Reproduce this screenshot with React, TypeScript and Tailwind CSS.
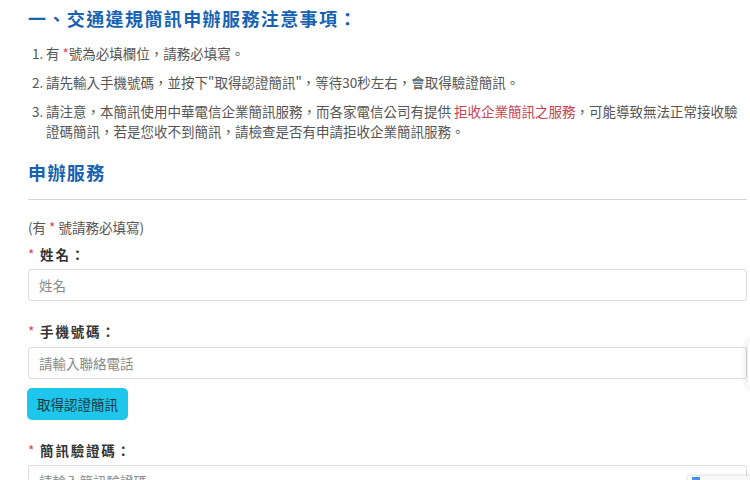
import React from "react";

const font = { fontFamily: '"Noto Sans CJK TC", "Noto Sans", sans-serif', fontFeatureSettings: '"locl" 1' };

function Label({ text }: { text: string }) {
  return (
    <div className="h-[20px] leading-[20px] text-[13.5px] font-bold text-[#333] tracking-[1.8px]">
      <span className="text-[#d0455a] font-normal mr-[4px]">*</span>
      {text}
    </div>
  );
}

function Field({ placeholder }: { placeholder: string }) {
  return (
    <input
      placeholder={placeholder}
      className="block w-full h-[32px] border border-[#dcdcdc] rounded-[3px] px-[10px] text-[13.5px] text-[#333] placeholder:text-[#8a8a8a] bg-white outline-none"
    />
  );
}

export default function App() {
  return (
    <div lang="zh-TW" style={font} className="relative w-[750px] h-[480px] overflow-hidden bg-white">
      <div className="pl-[28px] pr-[3px] pt-[5px]">
        <h1 className="text-[18px] leading-[26px] font-bold text-[#1662b3] tracking-[1.4px]">
          一、交通違規簡訊申辦服務注意事項：
        </h1>
        <div className="mt-[12px] text-[13.5px] leading-[20px] text-[#555]">
          <div className="flex">
            <span className="w-[18px] pl-[4px] shrink-0">1.</span>
            <span>
              有 <span className="text-[#d0455a]">*</span>號為必填欄位，請務必填寫。
            </span>
          </div>
          <div className="flex mt-[9px]">
            <span className="w-[18px] pl-[4px] shrink-0">2.</span>
            <span>請先輸入手機號碼，並按下"取得認證簡訊"，等待30秒左右，會取得驗證簡訊。</span>
          </div>
          <div className="flex mt-[9px]">
            <span className="w-[18px] pl-[4px] shrink-0">3.</span>
            <span className="pr-[6px]">
              請注意，本簡訊使用中華電信企業簡訊服務，而各家電信公司有提供{" "}
              <span className="text-[#c8414f]">拒收企業簡訊之服務</span>，可能導致無法正常接收驗證碼簡訊，若是您收不到簡訊，請檢查是否有申請拒收企業簡訊服務。
            </span>
          </div>
        </div>

        <h2 className="mt-[18px] text-[18px] leading-[26px] font-bold text-[#1662b3] tracking-[1.4px]">
          申辦服務
        </h2>
        <div className="mt-[14px] border-t border-[#d6d6d6]" />

        <div className="mt-[17px] h-[20px] leading-[20px] text-[13.5px] text-[#555]">
          (有 <span className="text-[#d0455a]">*</span> 號請務必填寫)
        </div>

        <div className="mt-[7px]">
          <Label text="姓名：" />
        </div>
        <div className="mt-[5px]">
          <Field placeholder="姓名" />
        </div>

        <div className="mt-[20px]">
          <Label text="手機號碼：" />
        </div>
        <div className="mt-[6px]">
          <Field placeholder="請輸入聯絡電話" />
        </div>
        <button className="mt-[9px] h-[32px] px-[10px] rounded-[5px] bg-[#1dc6ea] text-[13.5px] text-[#1f3440] -ml-px">
          取得認證簡訊
        </button>

        <div className="mt-[20px]">
          <Label text="簡訊驗證碼：" />
        </div>
        <div className="mt-[5px]">
          <Field placeholder="請輸入簡訊驗證碼" />
        </div>
      </div>

      <div className="absolute left-[748px] top-[342px] w-[40px] h-[44px] bg-white shadow-[0_0_8px_rgba(0,0,0,0.18)]" />
      <div className="absolute left-[688px] top-[476px] w-[70px] h-[60px] bg-[#f9f9f9] shadow-[0_0_4px_rgba(0,0,0,0.2)]">
        <div className="ml-[4px] mt-[1px] w-[8px] h-[6px] bg-[#4a90e2]" />
      </div>
    </div>
  );
}
